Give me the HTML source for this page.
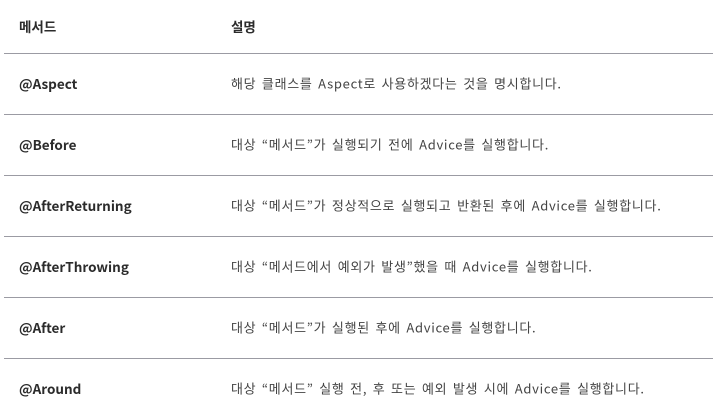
<!DOCTYPE html>
<html><head><meta charset="utf-8"><style>
html,body{margin:0;padding:0;background:#fff;width:713px;height:419px;overflow:hidden}
body{font-family:"Noto Sans CJK KR","Liberation Sans",sans-serif;font-size:13.5px;color:#333}
.row{position:absolute;left:4px;width:709px;border-bottom:1px solid #9b9ba3}
.c1{position:absolute;left:15px;font-weight:bold;color:#2b2b2b}
.c2{position:absolute;left:227px;color:#444;font-size:13px;letter-spacing:0.7px;word-spacing:2px}
.row span{top:50%;transform:translateY(-55%);white-space:nowrap}
</style></head><body>
<div class="row" style="top:0;height:53px"><span class="c1">메서드</span><span class="c2" style="font-weight:bold;color:#2b2b2b;font-size:13.5px;letter-spacing:0">설명</span></div>
<div class="row" style="top:54px;height:60px"><span class="c1">@Aspect</span><span class="c2">해당 클래스를 Aspect로 사용하겠다는 것을 명시합니다.</span></div>
<div class="row" style="top:115px;height:60px"><span class="c1">@Before</span><span class="c2">대상 “메서드”가 실행되기 전에 Advice를 실행합니다.</span></div>
<div class="row" style="top:176px;height:60px"><span class="c1">@AfterReturning</span><span class="c2">대상 “메서드”가 정상적으로 실행되고 반환된 후에 Advice를 실행합니다.</span></div>
<div class="row" style="top:237px;height:60px"><span class="c1">@AfterThrowing</span><span class="c2">대상 “메서드에서 예외가 발생”했을 때 Advice를 실행합니다.</span></div>
<div class="row" style="top:298px;height:60px"><span class="c1">@After</span><span class="c2">대상 “메서드”가 실행된 후에 Advice를 실행합니다.</span></div>
<div class="row" style="top:359px;height:60px;border-bottom:none"><span class="c1">@Around</span><span class="c2">대상 “메서드” 실행 전, 후 또는 예외 발생 시에 Advice를 실행합니다.</span></div>
</body></html>
